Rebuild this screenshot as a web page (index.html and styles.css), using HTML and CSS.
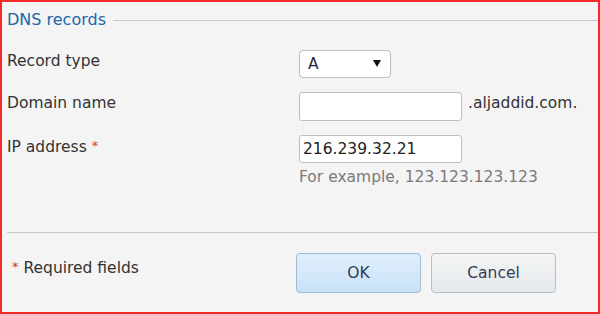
FILE: index.html
```html
<!DOCTYPE html>
<html lang="en">
<head>
  <meta charset="UTF-8">
  <title>DNS records</title>
  <link rel="stylesheet" href="styles.css">
</head>
<body>

<div class="panel">
  <!-- heading with rule -->
  <div class="legend">
    <span class="legend-title">DNS records</span>
    <span class="legend-rule"></span>
  </div>

  <div class="form">
    <div class="field">
      <label class="field-label" for="recType">Record type</label>
      <div class="control">
        <span class="select-wrap">
          <select id="recType" class="select">
            <option>A</option>
            <option>AAAA</option>
            <option>CNAME</option>
            <option>MX</option>
            <option>TXT</option>
          </select>
        </span>
      </div>
    </div>

    <div class="field field-domain">
      <label class="field-label" for="domain">Domain name</label>
      <div class="control">
        <input id="domain" class="text-input" type="text" value="">
        <span class="suffix">.aljaddid.com.</span>
      </div>
    </div>

    <div class="field">
      <label class="field-label" for="ip">IP address <span class="req">*</span></label>
      <div class="control control-stack">
        <input id="ip" class="text-input input-ip" type="text" value="216.239.32.21">
        <div class="hint">For example, 123.123.123.123</div>
      </div>
    </div>
  </div>

  <div class="separator"></div>

  <!-- footer: note and buttons -->
  <div class="actions">
    <div class="note"><span class="req">*</span> Required fields</div>
    <div class="buttons">
      <button class="btn btn-primary" type="button">OK</button>
      <button class="btn" type="button">Cancel</button>
    </div>
  </div>
</div>

</body>
</html>
```

FILE: styles.css
```css
/* page */
body {
  margin: 0;
  font-family: "DejaVu Sans", Verdana, sans-serif;
  font-size: 15.5px;
  color: #333;
}

/* outer panel with red frame */
.panel {
  height: 314px;
  box-sizing: border-box;
  border: 2px solid #f42a2a;
  background-color: #f4f4f4;
  padding: 8px 0 0 5px;
}

/* heading */
.legend {
  display: flex;
  align-items: center;
  height: 20px;
}
.legend-title {
  color: #2266ac;
  font-size: 16px;
  line-height: 20px;
  white-space: nowrap;
}
.legend-rule {
  flex: 1;
  height: 1px;
  margin-left: 7px;
  margin-top: 1px;
  background-color: #c6cbd0;
}

/* form rows */
.form {
  margin-top: 20px;
  display: flex;
  flex-direction: column;
  gap: 14px;
}
.field {
  display: flex;
  align-items: flex-start;
}
.field-label {
  width: 292px;
  line-height: 22px;
}
.req {
  color: #d23a3a;
  font-size: 13px;
  vertical-align: 2px;
}
.control {
  display: flex;
  align-items: flex-start;
}
.control-stack {
  flex-direction: column;
}

/* select box */
.select-wrap {
  position: relative;
  display: inline-block;
}
.select-wrap::after {
  content: "";
  position: absolute;
  right: 10px;
  top: 10px;
  border-left: 4px solid transparent;
  border-right: 4px solid transparent;
  border-top: 7px solid #111;
  pointer-events: none;
}
.select {
  -webkit-appearance: none;
  appearance: none;
  width: 92px;
  height: 28px;
  box-sizing: border-box;
  border: 1px solid #b7bec6;
  border-radius: 4px;
  background-color: #fff;
  padding: 0 0 0 8px;
  font-family: inherit;
  font-size: 15.5px;
  color: #222a3a;
  margin: 0;
}

/* text inputs */
.text-input {
  width: 163px;
  height: 29px;
  box-sizing: border-box;
  border: 1px solid #b7bec6;
  border-radius: 3px;
  background-color: #fff;
  padding: 0 3px;
  font-family: inherit;
  font-size: 15.5px;
  color: #222;
  margin: 0;
}
.input-ip {
  height: 28px;
}
.suffix {
  margin-left: 6px;
  line-height: 22px;
  white-space: nowrap;
}
.hint {
  margin-top: 5px;
  line-height: 18px;
  color: #7a7a7a;
  white-space: nowrap;
}

/* bottom divider */
.separator {
  height: 1px;
  margin-top: 46px;
  background-color: #c8c8c8;
}

/* footer */
.actions {
  display: flex;
  align-items: flex-start;
  margin-top: 20px;
}
.note {
  width: 284px;
  padding: 5px 0 0 5px;
  line-height: 18px;
}
.buttons {
  display: flex;
  gap: 10px;
}
.btn {
  width: 125px;
  height: 40px;
  box-sizing: border-box;
  border: 1px solid #b6bec6;
  border-radius: 4px;
  background: linear-gradient(#f2f4f5, #e6e9ec);
  font-family: inherit;
  font-size: 15.5px;
  color: #343c50;
  margin: 0;
}
.btn-primary {
  border-color: #9fbad2;
  background: linear-gradient(#e0effc, #c9e2f8);
}
```
